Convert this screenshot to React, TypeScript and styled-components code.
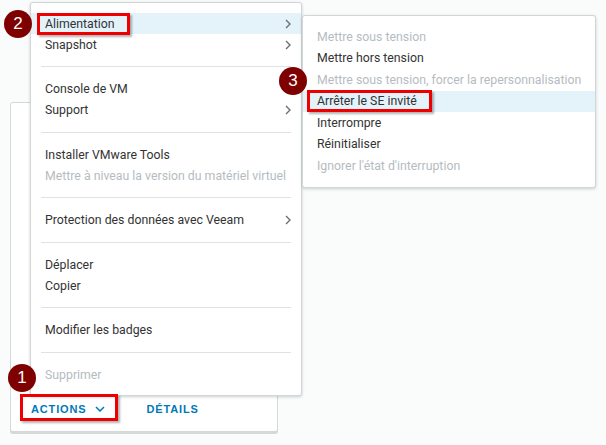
import React from "react";
import styled, { createGlobalStyle } from "styled-components";

const Global = createGlobalStyle`
  html, body { margin: 0; padding: 0; background: #fafbfb; }
  body { font-family: Roboto, "Liberation Sans", sans-serif; }
`;

const Stage = styled.div`
  position: relative;
  width: 606px;
  height: 445px;
  overflow: hidden;
  padding: 102px 0 0 10px;
  box-sizing: border-box;
`;

const Card = styled.div`
  width: 268px;
  height: 330px;
  box-sizing: border-box;
  background: #fff;
  border: 1px solid #d4d8da;
  border-radius: 3px;
  box-shadow: 0 2px 0 0 #d5d9db;
  display: flex;
  flex-direction: column;
  justify-content: flex-end;
`;

const Footer = styled.div`
  height: 38px;
  box-sizing: border-box;
  display: flex;
  align-items: flex-start;
  padding: 1px 0 0 9px;
  gap: 17px;
`;

const FooterAction = styled.span<{ $marked?: boolean }>`
  position: relative;
  z-index: 3;
  height: 27px;
  box-sizing: border-box;
  display: inline-flex;
  align-items: center;
  gap: 9px;
  padding: 2px 10px 0 8px;
  border: 3px solid ${(p) => (p.$marked ? "#ee0000" : "transparent")};
  box-shadow: ${(p) => (p.$marked ? "2px 2px 2px rgba(0,0,0,0.3)" : "none")};
  font-family: "Liberation Sans", Arial, sans-serif;
  font-weight: 700;
  font-size: 11px;
  letter-spacing: 0.85px;
  color: #0079b8;
`;

const Menu = styled.div<{ $left: number; $top: number; $width: number }>`
  position: absolute;
  left: ${(p) => p.$left}px;
  top: ${(p) => p.$top}px;
  width: ${(p) => p.$width}px;
  box-sizing: border-box;
  background: #fff;
  border: 1px solid #d2d6d8;
  border-radius: 3px;
  box-shadow: 0 1px 3px rgba(110, 120, 125, 0.35);
  padding: 10px 0;
  display: flex;
  flex-direction: column;
`;

const Item = styled.div<{ $disabled?: boolean; $active?: boolean }>`
  height: 21px;
  display: flex;
  align-items: center;
  justify-content: space-between;
  padding: 0 10px 0 14px;
  font-size: 12.3px;
  color: ${(p) => (p.$disabled ? "#b5bcc1" : "#333333")};
  background: ${(p) => (p.$active ? "#e4f2fa" : "transparent")};
  white-space: nowrap;
`;

const SubMenu = styled(Menu)`
  ${Item} {
    height: 21.5px;
  }
`;

const Separator = styled.div`
  height: 1px;
  background: #dfe2e4;
  margin: 11.25px 10px;
`;

const Callout = styled.span<{ $pl: number }>`
  position: relative;
  z-index: 3;
  height: 22px;
  box-sizing: border-box;
  display: inline-flex;
  align-items: center;
  margin-left: ${(p) => -(p.$pl + 3)}px;
  padding: 0 12px 0 ${(p) => p.$pl}px;
  border: 3px solid #ee0000;
  box-shadow: 2px 2px 2px rgba(0, 0, 0, 0.3);
`;

const Badge = styled.span<{ $dx: number; $dy: number }>`
  position: absolute;
  left: ${(p) => p.$dx}px;
  top: ${(p) => p.$dy}px;
  width: 28px;
  height: 28px;
  border-radius: 50%;
  background: #7f0000;
  color: #fff;
  font-family: "Liberation Sans", Arial, sans-serif;
  font-size: 17px;
  font-weight: 400;
  letter-spacing: 0;
  display: flex;
  align-items: center;
  justify-content: center;
`;

const Chevron = () => (
  <svg width="6" height="10" viewBox="0 0 6 10">
    <polyline points="1,1 5,5 1,9" fill="none" stroke="#6a6f73" strokeWidth="1.4" />
  </svg>
);

const Down = () => (
  <svg width="10" height="6" viewBox="0 0 10 6">
    <polyline points="1,1 5,5 9,1" fill="none" stroke="#0079b8" strokeWidth="1.5" />
  </svg>
);

type Mark = { n: number; pl: number; dx: number; dy: number };
type Entry =
  | { label: string; sub?: boolean; disabled?: boolean; active?: boolean; mark?: Mark }
  | "sep";

const mainItems: Entry[] = [
  { label: "Alimentation", sub: true, active: true, mark: { n: 2, pl: 5, dx: -36, dy: -6 } },
  { label: "Snapshot", sub: true },
  "sep",
  { label: "Console de VM", sub: true },
  { label: "Support", sub: true },
  "sep",
  { label: "Installer VMware Tools" },
  { label: "Mettre à niveau la version du matériel virtuel", disabled: true },
  "sep",
  { label: "Protection des données avec Veeam", sub: true },
  "sep",
  { label: "Déplacer" },
  { label: "Copier" },
  "sep",
  { label: "Modifier les badges" },
  "sep",
  { label: "Supprimer", disabled: true },
];

const powerItems: Entry[] = [
  { label: "Mettre sous tension", disabled: true },
  { label: "Mettre hors tension" },
  { label: "Mettre sous tension, forcer la repersonnalisation", disabled: true },
  { label: "Arrêter le SE invité", active: true, mark: { n: 3, pl: 7, dx: -31, dy: -26 } },
  { label: "Interrompre" },
  { label: "Réinitialiser" },
  { label: "Ignorer l'état d'interruption", disabled: true },
];

const renderEntries = (entries: Entry[]) =>
  entries.map((e, i) =>
    e === "sep" ? (
      <Separator key={i} />
    ) : (
      <Item key={i} $disabled={e.disabled} $active={e.active}>
        {e.mark ? (
          <Callout $pl={e.mark.pl}>
            {e.label}
            <Badge $dx={e.mark.dx} $dy={e.mark.dy}>{e.mark.n}</Badge>
          </Callout>
        ) : (
          <span>{e.label}</span>
        )}
        {e.sub && <Chevron />}
      </Item>
    )
  );

export default function App() {
  return (
    <>
      <Global />
      <Stage>
        <Card>
          <Footer>
            <FooterAction $marked>
              ACTIONS <Down />
              <Badge $dx={-15} $dy={-33}>1</Badge>
            </FooterAction>
            <FooterAction>DÉTAILS</FooterAction>
          </Footer>
        </Card>
        <Menu $left={30} $top={2} $width={272}>
          {renderEntries(mainItems)}
        </Menu>
        <SubMenu $left={302} $top={15} $width={294}>
          {renderEntries(powerItems)}
        </SubMenu>
      </Stage>
    </>
  );
}
